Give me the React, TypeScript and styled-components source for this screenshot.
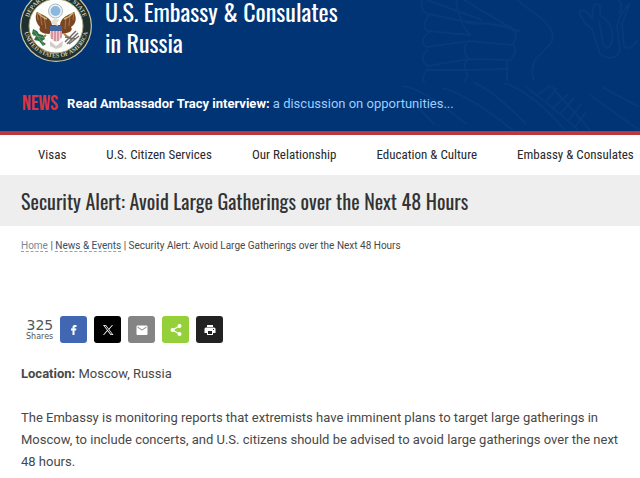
import React from 'react';
import styled, { createGlobalStyle } from 'styled-components';

const GlobalStyle = createGlobalStyle`
  * { box-sizing: border-box; }
  body {
    margin: 0;
    background: #fff;
    color: #484848;
    font: 13px/22px Roboto, "Liberation Sans", sans-serif;
    overflow-x: hidden;
  }
  h1, h2, p { margin: 0; font-weight: 400; }
`;

const narrow = 'Oswald, "Roboto Condensed", "Liberation Sans Narrow", "Liberation Sans", sans-serif';

const Masthead = styled.header`
  position: relative;
  overflow: hidden;
  background: #003474;
  border-bottom: 4px solid #bd373f;
  padding: 0 20px 16px;
`;

const Watermark = styled.svg`
  position: absolute;
  top: 0;
  right: 0;
`;

const Brand = styled.div`
  position: relative;
  display: flex;
  gap: 13px;
`;

const SiteName = styled.h1`
  margin-top: -4px;
  color: #fff;
  font-family: ${narrow};
  font-size: 24px;
  line-height: 31px;
  white-space: nowrap;
`;

const NewsBar = styled.div`
  position: relative;
  display: flex;
  align-items: center;
  gap: 9px;
  height: 22px;
  margin-top: 30px;
  padding-left: 2px;
  white-space: nowrap;
`;

const NewsLabel = styled.span`
  color: #dc3545;
  font-family: "Bebas Neue", ${narrow};
  font-size: 21px;
`;

const NewsLink = styled.a`
  color: #9dccff;
  font-size: 13px;
  text-decoration: none;
  strong { color: #fff; }
`;

const Nav = styled.nav`
  display: flex;
  align-items: center;
  gap: 40px;
  height: 40px;
  padding-left: 38px;
  overflow: hidden;
`;

const NavLink = styled.a`
  flex: none;
  color: #292929;
  font-family: "Roboto Condensed", "Liberation Sans Narrow", "Liberation Sans", sans-serif;
  font-size: 13px;
  text-decoration: none;
  white-space: nowrap;
`;

const TitleBand = styled.div`
  background: #eee;
  padding: 12px 21px 11px;
`;

const Title = styled.h2`
  color: #333;
  font-family: ${narrow};
  font-size: 20px;
  line-height: 28px;
`;

const Content = styled.main`
  padding: 11px 16px 0 21px;
`;

const Crumbs = styled.nav`
  font-size: 10px;
  line-height: 18px;
`;

const Crumb = styled.a<{ $muted?: boolean }>`
  color: ${p => (p.$muted ? '#7b8797' : '#30506b')};
  border-bottom: 1px dashed #8fa3b8;
  text-decoration: none;
`;

const ShareBar = styled.div`
  display: flex;
  align-items: center;
  gap: 7px;
  margin: 61px 0 20px 5px;
`;

const Count = styled.div`
  display: flex;
  flex-direction: column;
  align-items: flex-end;
  color: #555;
  font-family: "DejaVu Sans", sans-serif;
  font-size: 14px;
  line-height: 14px;
  small { font-size: 8px; line-height: 9px; }
`;

const ShareButton = styled.button<{ $color: string }>`
  display: grid;
  place-items: center;
  width: 27px;
  height: 27px;
  padding: 0;
  border: 0;
  border-radius: 3px;
  background: ${p => p.$color};
  color: #fff;
  cursor: pointer;
`;

const Paragraph = styled.p`
  & + & { margin-top: 22px; }
`;

function Seal() {
  return (
    <svg width="72" height="63" viewBox="0 0 72 63" role="img" aria-label="Department of State seal">
      <defs>
        <path id="sealTop" d="M7.5 26 A28.5 28.5 0 0 1 64.5 26" />
        <path id="sealBottom" d="M3.5 25 A32.5 32.5 0 0 0 68.5 25" />
      </defs>
      <circle cx="36" cy="26" r="36" fill="#c5c6ac" />
      <circle cx="36" cy="26" r="34.8" fill="#20302f" />
      <circle cx="36" cy="26" r="27" fill="#fdfdfa" stroke="#a7a47e" />
      <g fill="#d3cfae" fontFamily="Liberation Serif, serif" fontSize="6" fontWeight="700" textAnchor="middle">
        <text><textPath href="#sealTop" startOffset="50%">DEPARTMENT OF STATE</textPath></text>
        <text><textPath href="#sealBottom" startOffset="50%">UNITED STATES OF AMERICA</textPath></text>
      </g>
      <circle cx="35.500" cy="11" r="7" fill="#edf2f5" stroke="#a9bbc7" />
      <circle cx="35.500" cy="11" r="5" fill="#8db8de" />
      <path d="M32 25C31 18 25 16 17 12C14 18 17 24 20 27C18 31 22 34 29 34L34 30L39 34C48 34 54 31 51 27C56 24 57 18 54 12C47 16 41 17 40 25Z" fill="#7a4523" />
      <path d="M17 12L18 20M20 14L22 25M24 16L26 29M54 12L53 20M50 14L49 26M46 16L45 29" stroke="#a87850" strokeWidth="1" />
      <path d="M18 13Q23 18 27 19M53 13Q48 18 44 19" fill="none" stroke="#d5b672" strokeWidth="1.500" />
      <path d="M32 24C31 20 34 18 37 19L40 21L37 22L38 26Z" fill="#e6dfcf" />
      <path d="M26 35L20 40M44 34L52 40" stroke="#ae8138" strokeWidth="2" />
      <path d="M30 27H42V36Q41 40 36 42Q31 40 30 36Z" fill="#f1cdd2" />
      <path d="M32 31V39M35 31V41M38 31V41M41 31V38" stroke="#bd6170" strokeWidth="1" />
      <path d="M30 26H42V31H30Z" fill="#42659b" />
      <path d="M30 41L36 46L43 41L42 47L36 49L30 46Z" fill="#d1cdcb" />
      <path d="M13 29L17 31L19 34L23 35L25 39L22 41L26 44L23 46L19 41L14 40L16 36L12 34Z" fill="#2c7047" />
      <path d="M14 31L24 45M13 35L24 38" stroke="#6d9660" />
      <path d="M45 42L56 31M47 44L58 33M49 44L59 36M45 37L56 39" stroke="#716d72" strokeWidth="1.500" />
    </svg>
  );
}

function EagleWatermark() {
  return (
    <Watermark width="240" height="131" viewBox="0 0 240 131" fill="none" stroke="#043b79" strokeWidth="2" aria-hidden="true">
      <path d="M22 0Q20 13 29 14L62 21Q70 25 88 23L120 31M27 0L82 20M64 0L118 32M117 0L131 11Q159 29 151 43L135 60Q130 71 134 81" />
      <path d="M62 20Q55 7 57 0M30 14Q20 26 28 31L70 35Q60 23 61 19M30 31Q17 42 27 47L69 41L112 45Q120 37 111 27L65 21" />
      <path d="M28 49Q18 60 28 66L69 59L110 60Q119 51 113 45M67 41Q61 54 70 59M28 69Q20 78 25 83M28 70H67L109 69M68 59Q61 67 68 75L64 83M107 61L107 81" />
      <path d="M2 86Q23 88 66 124M12 101L35 125M42 88Q64 92 113 130M73 82Q93 90 126 124M104 83Q131 91 165 130M126 87Q153 107 178 130M151 86L190 130" />
      <path d="M179 12Q184 24 192 29L200 54Q214 63 220 51L217 27Q219 14 230 3M179 12Q184 7 192 18L194 5Q202 1 200 15Q217 26 211 45Q206 51 203 43L199 21M230 3L222 24L224 46Q230 52 238 39M218 0Q224 4 219 14" />
      <path d="M138 94L150 86M147 101L157 88M153 108L168 94M160 114L174 98M168 121L181 104M175 127L187 111M190 95L239 130M202 87L239 107" />
    </Watermark>
  );
}

type IconName = 'facebook' | 'x' | 'mail' | 'share' | 'print';

function ShareIcon({ name }: { name: IconName }) {
  return (
    <svg width="12" height="12" viewBox="0 0 24 24" fill="currentColor" aria-hidden="true">
      {name === 'facebook' && <path d="M9 22V13H6V9H9V7C9 3 11 2 15 2H17V6H16C14 6 13 6 13 8V9H17L16 13H13V22Z" />}
      {name === 'x' && <path fillRule="evenodd" d="M2 2H8L13.500 9.400L20 2H22L14.500 10.800L23 22H17L11 13.800L4 22H2L10 12.400ZM5 3.500L18 20.500H20L7.200 3.500Z" />}
      {name === 'mail' && <path fillRule="evenodd" d="M3 3H21Q23 3 23 5V20Q23 22 21 22H3Q1 22 1 20V5Q1 3 3 3ZM3 5V7L12 13L21 7V5L12 11Z" />}
      {name === 'share' && (
        <>
          <circle cx="5" cy="12" r="4" /><circle cx="19" cy="4" r="4" /><circle cx="19" cy="20" r="4" />
          <path d="M19 4L5 12L19 20" fill="none" stroke="currentColor" strokeWidth="2.500" />
        </>
      )}
      {name === 'print' && <path fillRule="evenodd" d="M6 2H18V6H6ZM4 7H20Q23 7 23 10V18H18V22H6V18H1V10Q1 7 4 7ZM8 14V20H16V14ZM18 10V12H20V10Z" />}
    </svg>
  );
}

const shares: { name: IconName; label: string; color: string }[] = [
  { name: 'facebook', label: 'Share on Facebook', color: '#4267b2' },
  { name: 'x', label: 'Share on X', color: '#000' },
  { name: 'mail', label: 'Email', color: '#848484' },
  { name: 'share', label: 'Share', color: '#95d03a' },
  { name: 'print', label: 'Print', color: '#222' },
];

const sections = ['Visas', 'U.S. Citizen Services', 'Our Relationship', 'Education & Culture', 'Embassy & Consulates'];

export default function App() {
  return (
    <>
      <GlobalStyle />
      <Masthead>
        <EagleWatermark />
        <Brand>
          <Seal />
          <SiteName>U.S. Embassy &amp; Consulates<br />in Russia</SiteName>
        </Brand>
        <NewsBar>
          <NewsLabel>NEWS</NewsLabel>
          <NewsLink href="#interview"><strong>Read Ambassador Tracy interview:</strong> a discussion on opportunities...</NewsLink>
        </NewsBar>
      </Masthead>
      <Nav aria-label="Main">
        {sections.map(s => <NavLink key={s} href="#section">{s}</NavLink>)}
      </Nav>
      <TitleBand>
        <Title>Security Alert: Avoid Large Gatherings over the Next 48 Hours</Title>
      </TitleBand>
      <Content>
        <Crumbs aria-label="Breadcrumb">
          <Crumb href="#home" $muted>Home</Crumb> | <Crumb href="#news">News &amp; Events</Crumb> | Security Alert: Avoid Large Gatherings over the Next 48 Hours
        </Crumbs>
        <ShareBar>
          <Count>325<small>Shares</small></Count>
          {shares.map(s => (
            <ShareButton key={s.name} type="button" aria-label={s.label} $color={s.color}>
              <ShareIcon name={s.name} />
            </ShareButton>
          ))}
        </ShareBar>
        <Paragraph><strong>Location:</strong> Moscow, Russia</Paragraph>
        <Paragraph>
          The Embassy is monitoring reports that extremists have imminent plans to target large gatherings in
          Moscow, to include concerts, and U.S. citizens should be advised to avoid large gatherings over the next
          48 hours.
        </Paragraph>
      </Content>
    </>
  );
}
